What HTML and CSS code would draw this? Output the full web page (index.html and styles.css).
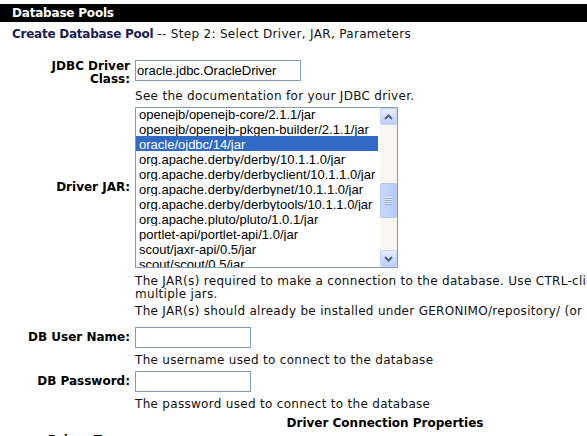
FILE: index.html
```html
<!DOCTYPE html>
<html>
<head>
<meta charset="utf-8">
<title>Database Pools</title>
<link rel="stylesheet" href="styles.css">
</head>
<body>
<div class="titlebar">Database Pools</div>
<p class="subtitle"><b>Create Database Pool</b> <span class="step">-- Step 2: Select Driver, JAR, Parameters</span></p>
<form class="form">
  <div class="label two">JDBC Driver Class:</div>
  <div class="ctrl"><input class="textbox class-box" type="text" value="oracle.jdbc.OracleDriver"></div>
  <div class="spacer"></div>
  <div class="desc desc-first">See the documentation for your JDBC driver.</div>

  <div class="label">Driver JAR:</div>
  <div class="ctrl">
    <div class="listbox">
      <div class="options">
        <div class="options-inner">
          <div class="opt">openejb/openejb-core/2.1.1/jar</div>
          <div class="opt">openejb/openejb-pkgen-builder/2.1.1/jar</div>
          <div class="opt sel">oracle/ojdbc/14/jar</div>
          <div class="opt">org.apache.derby/derby/10.1.1.0/jar</div>
          <div class="opt">org.apache.derby/derbyclient/10.1.1.0/jar</div>
          <div class="opt">org.apache.derby/derbynet/10.1.1.0/jar</div>
          <div class="opt">org.apache.derby/derbytools/10.1.1.0/jar</div>
          <div class="opt">org.apache.pluto/pluto/1.0.1/jar</div>
          <div class="opt">portlet-api/portlet-api/1.0/jar</div>
          <div class="opt">scout/jaxr-api/0.5/jar</div>
          <div class="opt">scout/scout/0.5/jar</div>
        </div>
      </div>
      <div class="scrollbar">
        <div class="sb-btn"><svg width="9" height="6" viewBox="0 0 9 6"><path d="M1 5 L4.5 1.5 L8 5" fill="none" stroke="#4d6185" stroke-width="2"/></svg></div>
        <div class="sb-track sb-track-top"></div>
        <div class="sb-thumb"><span></span><span></span><span></span><span></span></div>
        <div class="sb-track sb-track-bottom"></div>
        <div class="sb-btn"><svg width="9" height="6" viewBox="0 0 9 6"><path d="M1 1 L4.5 4.5 L8 1" fill="none" stroke="#4d6185" stroke-width="2"/></svg></div>
      </div>
    </div>
  </div>
  <div class="spacer"></div>
  <div class="desc desc-jar">
    <p class="note">The JAR(s) required to make a connection to the database. Use CTRL-click to select multiple jars.</p>
    <p class="note">The JAR(s) should already be installed under GERONIMO/repository/ (or lib/)</p>
  </div>

  <div class="label">DB User Name:</div>
  <div class="ctrl"><input class="textbox small-box" type="text" value=""></div>
  <div class="spacer"></div>
  <div class="desc">The username used to connect to the database</div>

  <div class="label">DB Password:</div>
  <div class="ctrl"><input class="textbox small-box" type="password" value=""></div>
  <div class="spacer"></div>
  <div class="desc">The password used to connect to the database</div>

  <div class="heading">Driver Connection Properties</div>

  <div class="label last">Driver Type:</div>
  <div class="ctrl"><input class="textbox small-box later" type="text" value=""></div>
</form>
</body>
</html>
```

FILE: styles.css
```css
html, body {
  margin: 0;
  padding: 0;
  overflow: hidden;
  background: #fff;
}

body {
  font-family: "DejaVu Sans", Verdana, sans-serif;
  font-size: 12px;
  color: #111;
}

.titlebar {
  margin-top: 4px;
  height: 18px;
  line-height: 18px;
  background: #000;
  color: #fff;
  font-weight: bold;
  padding-left: 12px;
  letter-spacing: -0.2px;
}

.subtitle {
  margin: 4px 0 0 12px;
  line-height: 16px;
}

.subtitle b {
  color: #1d1d55;
  letter-spacing: -0.25px;
}

.step {
  letter-spacing: 0.32px;
}

.form {
  display: grid;
  grid-template-columns: 130px 635px;
  column-gap: 5px;
  margin-top: 15px;
}

.label {
  text-align: right;
  font-weight: bold;
  padding-left: 20px;
  align-self: center;
  line-height: 13px;
  color: #000;
}

.label.two {
  padding-top: 3px;
}

.label.last {
  align-self: start;
  padding-top: 4px;
}

.ctrl {
  padding: 3px 0;
}

.desc {
  padding: 3px 0 1px;
  line-height: 13px;
  max-width: 560px;
  letter-spacing: 0.3px;
}

.desc-first {
  padding-top: 4px;
}

.desc-jar {
  padding-top: 4px;
  padding-bottom: 6px;
}

.note {
  margin: 0;
}

.note + .note {
  margin-top: 4px;
}

.heading {
  grid-column: 1 / -1;
  text-align: center;
  font-weight: bold;
  padding-top: 5px;
  line-height: 13px;
  color: #000;
}

.textbox {
  display: block;
  height: 21px;
  box-sizing: border-box;
  border: 1px solid #7f9db9;
  margin: 0;
  padding: 0 1px;
  font: 13px "Liberation Sans", Arial, sans-serif;
  color: #000;
  background: #fff;
  outline: none;
}

.textbox.later {
  margin-top: 8px;
}

.class-box {
  width: 166px;
}

.small-box {
  width: 116px;
}

.listbox {
  width: 263px;
  height: 161px;
  box-sizing: border-box;
  border: 1px solid #7f9db9;
  display: flex;
  overflow: hidden;
  background: #fff;
}

.options {
  flex: 1;
  overflow: hidden;
  font: 13px "Liberation Sans", Arial, sans-serif;
  color: #000;
}

.options-inner {
  margin-top: -2px;
}

.opt {
  height: 15px;
  line-height: 18px;
  padding-left: 3px;
  white-space: nowrap;
  overflow: hidden;
}

.opt.sel {
  background: #316ac5;
  color: #fff;
  margin-right: 2px;
}

.scrollbar {
  width: 17px;
  display: flex;
  flex-direction: column;
  background: #f7f6f1;
}

.sb-btn {
  height: 17px;
  box-sizing: border-box;
  border: 1px solid #c3d3fd;
  border-radius: 2px;
  background: linear-gradient(#e6eefe, #bccff8);
  display: flex;
  align-items: center;
  justify-content: center;
}

.sb-track-top {
  height: 58px;
}

.sb-track-bottom {
  height: 32px;
}

.sb-thumb {
  height: 35px;
  box-sizing: border-box;
  border: 1px solid #b4c7f2;
  border-radius: 2px;
  background: linear-gradient(90deg, #c8d8fd, #b8cbf6);
  display: flex;
  flex-direction: column;
  align-items: center;
  justify-content: center;
  gap: 1px;
}

.sb-thumb span {
  display: block;
  width: 7px;
  height: 1px;
  background: #eef3ff;
  box-shadow: 0 1px 0 #8ca6e0;
}
```
